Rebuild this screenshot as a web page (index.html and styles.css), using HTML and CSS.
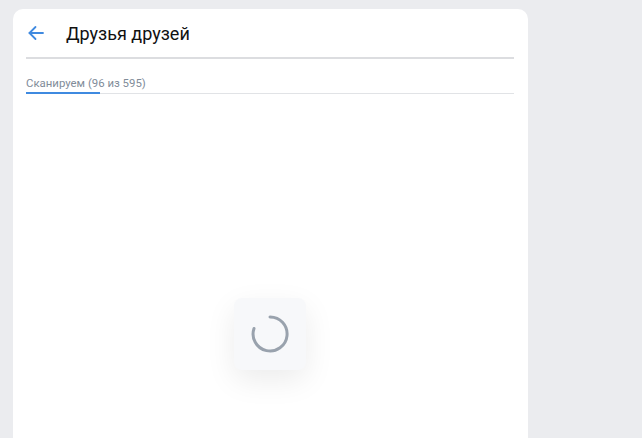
FILE: index.html
```html
<!DOCTYPE html>
<html lang="ru">
<head>
  <meta charset="UTF-8">
  <title>Друзья друзей</title>
  <link rel="stylesheet" href="styles.css">
</head>
<body>

  <div class="page">
    <main class="panel">
      <header class="panel-header">
        <button class="back" aria-label="Назад">
          <svg width="18" height="18" viewBox="0 0 18 18" fill="none" stroke="#3f8ae0" stroke-width="1.8" stroke-linecap="round" stroke-linejoin="round">
            <path d="M16 9H2.5"/>
            <path d="M8.5 3L2.5 9l6 6"/>
          </svg>
        </button>
        <h1>Друзья друзей</h1>
      </header>

      <section class="progress">
        <div class="progress-label">Сканируем (96 из 595)</div>
        <div class="progress-track">
          <div class="progress-bar" style="width: 15.2%"></div>
        </div>
      </section>

      <div class="loader">
        <div class="loader-box">
          <svg width="40" height="40" viewBox="0 0 40 40" fill="none">
            <path d="M20 3 A17 17 0 1 1 4 14.5" stroke="#99a2ad" stroke-width="3" stroke-linecap="round"/>
          </svg>
        </div>
      </div>
    </main>
  </div>

</body>
</html>
```

FILE: styles.css
```css
html {
  overflow: hidden;
}

body {
  margin: 0;
  font-family: Roboto, "Noto Sans", sans-serif;
  background-color: #ebecef;
  height: 438px;
  overflow: hidden;
}

.page {
  padding: 9px 0 0 13px;
}

.panel {
  width: 515px;
  height: 429px;
  background-color: white;
  border-radius: 10px 10px 0 0;
  padding: 0 14px 0 13px;
  box-sizing: border-box;
}

.panel-header {
  display: flex;
  align-items: center;
  height: 48px;
  border-bottom: 2px solid #dcdde0;
}

.back {
  background: none;
  border: none;
  padding: 0;
  margin: 0 21px 0 1px;
  width: 18px;
  height: 18px;
  cursor: pointer;
  display: flex;
}

.panel-header h1 {
  margin: 0;
  font-size: 18px;
  font-weight: 400;
  color: #111;
}

.progress {
  padding-top: 16px;
}

.progress-label {
  font-size: 11.4px;
  color: #818c99;
  line-height: 16px;
}

.progress-track {
  margin-top: 1px;
  height: 2px;
  background: linear-gradient(#e1e3e6, #e1e3e6) bottom / 100% 1px no-repeat;
}

.progress-bar {
  height: 2px;
  background-color: #3f8ae0;
}

.loader {
  display: flex;
  justify-content: center;
  padding-top: 204px;
}

.loader-box {
  width: 72px;
  height: 72px;
  border-radius: 8px;
  background-color: #f7f8fa;
  box-shadow: 0 10px 30px rgba(0, 0, 0, 0.08);
  display: flex;
  align-items: center;
  justify-content: center;
}
```
